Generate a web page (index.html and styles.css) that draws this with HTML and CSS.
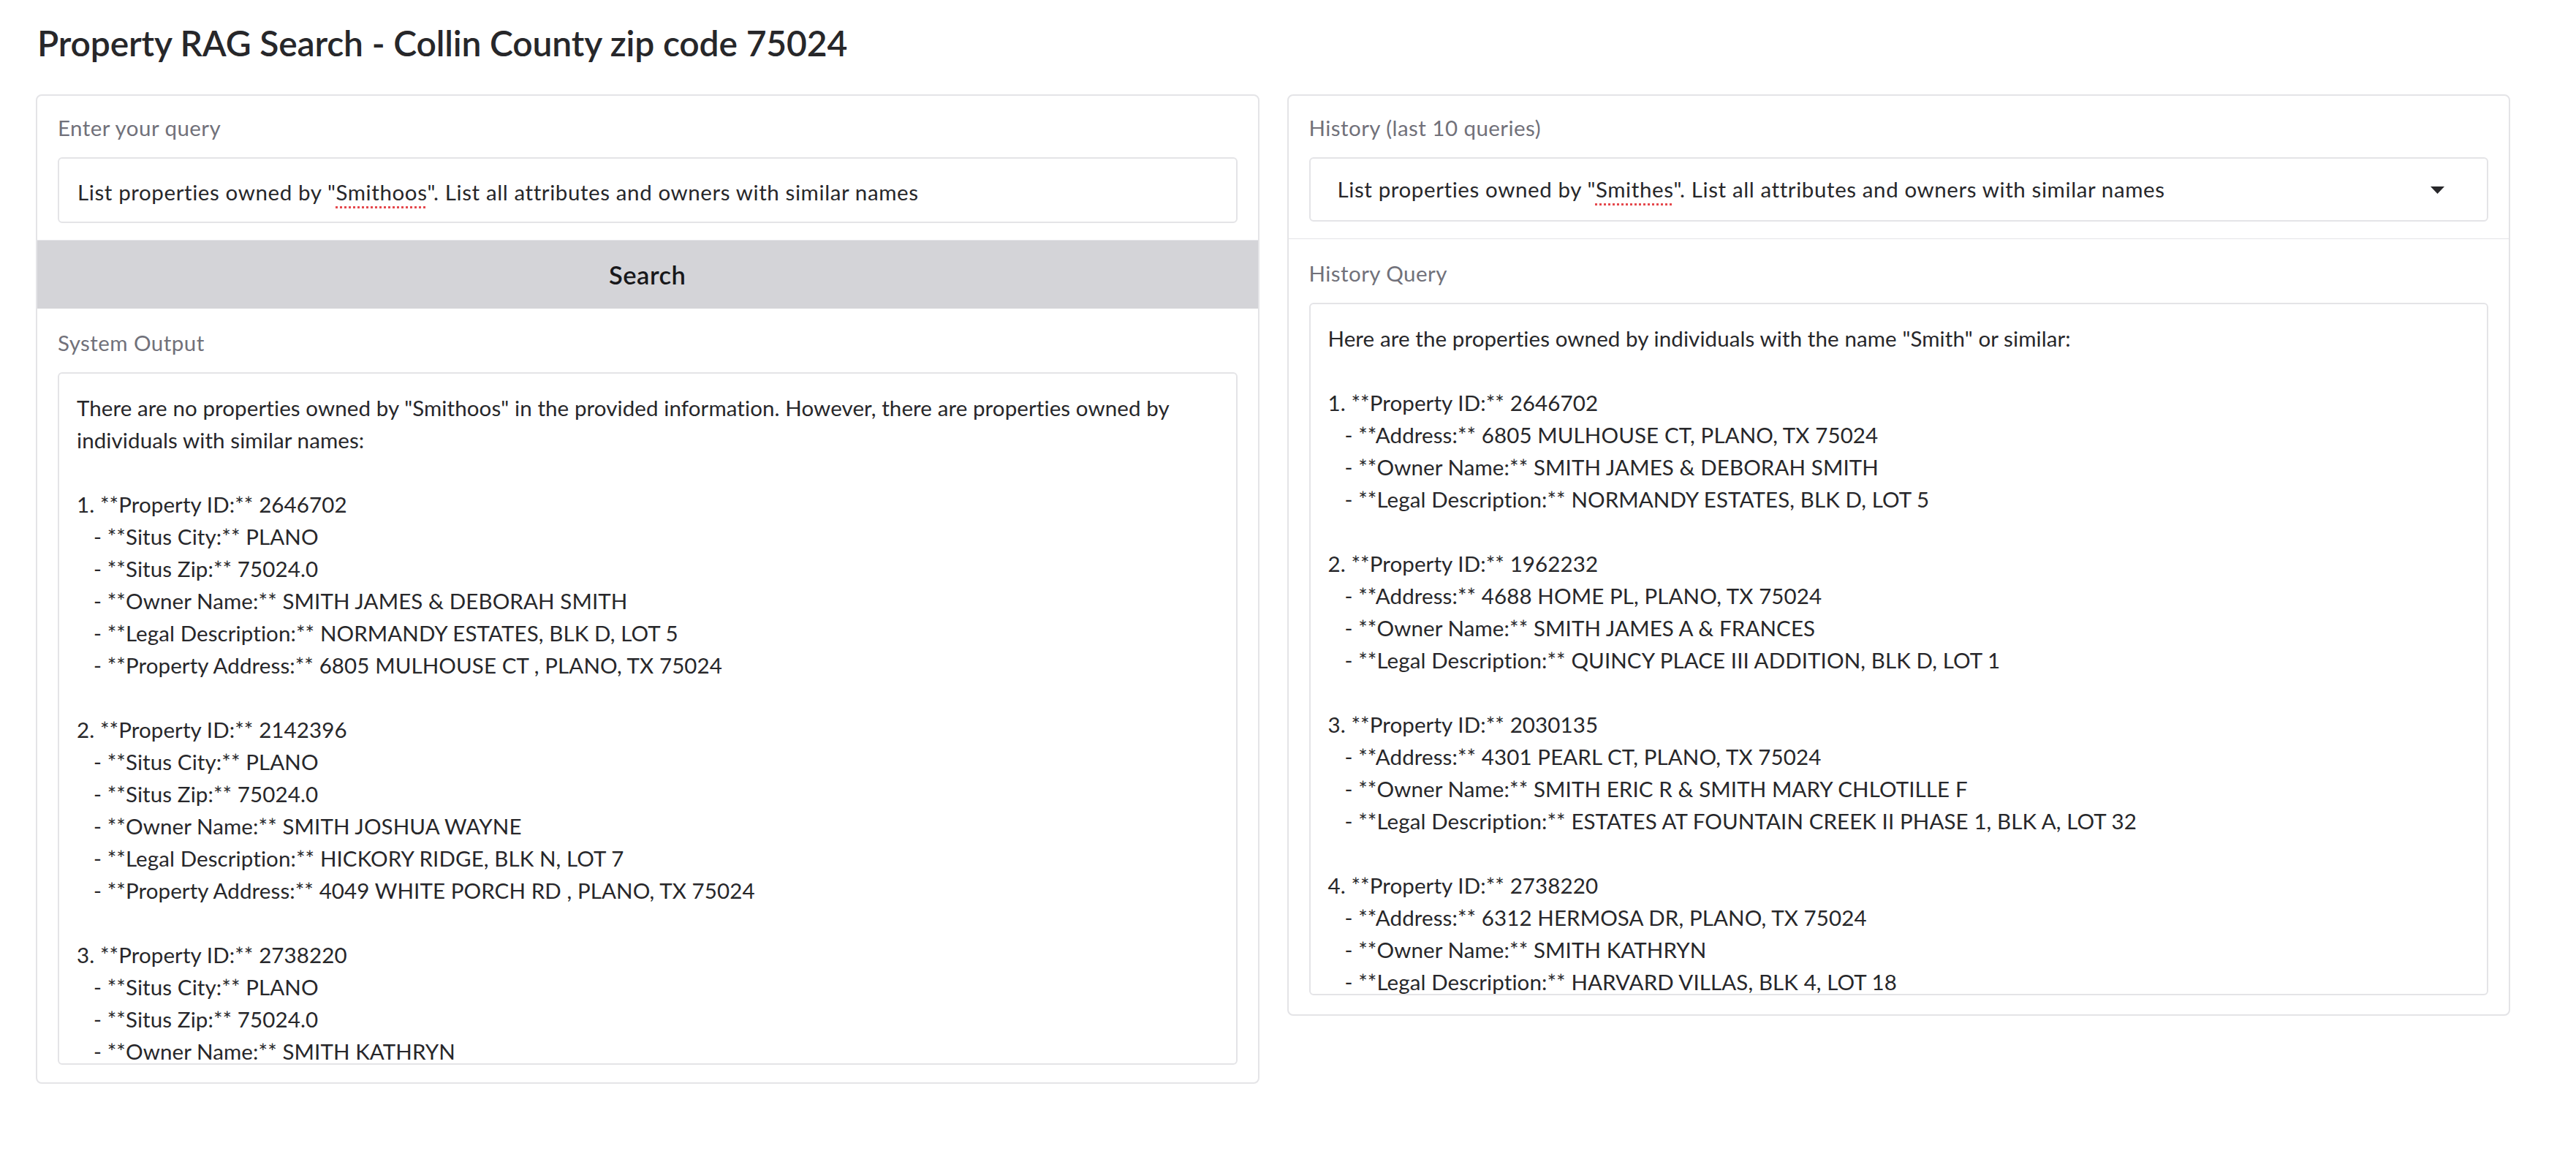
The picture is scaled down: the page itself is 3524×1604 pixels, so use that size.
FILE: index.html
```html
<!DOCTYPE html>
<html lang="en">
<head>
<meta charset="utf-8">
<title>Property RAG Search</title>
<link rel="stylesheet" href="styles.css">
</head>
<body>
<div class="app">
  <h1 class="title">Property RAG Search - Collin County zip code 75024</h1>
  <div class="columns">
    <section class="panel">
      <div class="block block-first">
        <div class="label">Enter your query</div>
        <div class="input">List properties owned by "<span class="misspelled">Smithoos</span>". List all attributes and owners with similar names</div>
      </div>
      <button class="search-btn" type="button">Search</button>
      <div class="block block-output">
        <div class="label">System Output</div>
        <div class="textarea">There are no properties owned by "Smithoos" in the provided information. However, there are properties owned by
individuals with similar names:

1. **Property ID:** 2646702
   - **Situs City:** PLANO
   - **Situs Zip:** 75024.0
   - **Owner Name:** SMITH JAMES &amp; DEBORAH SMITH
   - **Legal Description:** NORMANDY ESTATES, BLK D, LOT 5
   - **Property Address:** 6805 MULHOUSE CT , PLANO, TX 75024

2. **Property ID:** 2142396
   - **Situs City:** PLANO
   - **Situs Zip:** 75024.0
   - **Owner Name:** SMITH JOSHUA WAYNE
   - **Legal Description:** HICKORY RIDGE, BLK N, LOT 7
   - **Property Address:** 4049 WHITE PORCH RD , PLANO, TX 75024

3. **Property ID:** 2738220
   - **Situs City:** PLANO
   - **Situs Zip:** 75024.0
   - **Owner Name:** SMITH KATHRYN</div>
      </div>
    </section>
    <section class="panel">
      <div class="block block-first">
        <div class="label">History (last 10 queries)</div>
        <div class="dropdown">
          <span class="dropdown-text">List properties owned by "<span class="misspelled">Smithes</span>". List all attributes and owners with similar names</span>
          <svg class="caret" width="19" height="10" viewBox="0 0 19 10" aria-hidden="true"><path d="M0 0 L19 0 L9.5 10 Z" fill="#27272a"/></svg>
        </div>
      </div>
      <div class="block block-history">
        <div class="label">History Query</div>
        <div class="textarea">Here are the properties owned by individuals with the name "Smith" or similar:

1. **Property ID:** 2646702
   - **Address:** 6805 MULHOUSE CT, PLANO, TX 75024
   - **Owner Name:** SMITH JAMES &amp; DEBORAH SMITH
   - **Legal Description:** NORMANDY ESTATES, BLK D, LOT 5

2. **Property ID:** 1962232
   - **Address:** 4688 HOME PL, PLANO, TX 75024
   - **Owner Name:** SMITH JAMES A &amp; FRANCES
   - **Legal Description:** QUINCY PLACE III ADDITION, BLK D, LOT 1

3. **Property ID:** 2030135
   - **Address:** 4301 PEARL CT, PLANO, TX 75024
   - **Owner Name:** SMITH ERIC R &amp; SMITH MARY CHLOTILLE F
   - **Legal Description:** ESTATES AT FOUNTAIN CREEK II PHASE 1, BLK A, LOT 32

4. **Property ID:** 2738220
   - **Address:** 6312 HERMOSA DR, PLANO, TX 75024
   - **Owner Name:** SMITH KATHRYN
   - **Legal Description:** HARVARD VILLAS, BLK 4, LOT 18</div>
      </div>
    </section>
  </div>
</div>
</body>
</html>
```
FILE: styles.css
```css
* {
  box-sizing: border-box;
}

html, body {
  margin: 0;
  padding: 0;
  background: #ffffff;
}

body {
  font-family: "Lato", "Liberation Sans", sans-serif;
  color: #27272a;
}

.app {
  padding: 30px 90px 60px 49px;
}

.title {
  margin: 0;
  font-size: 48px;
  line-height: 1.2;
  font-weight: 600;
  letter-spacing: -0.15px;
  color: #27272a;
  padding-left: 2px;
}

.columns {
  display: grid;
  grid-template-columns: 1fr 1fr;
  column-gap: 38px;
  margin-top: 41px;
  align-items: start;
}

.panel {
  display: flex;
  flex-direction: column;
  border: 2px solid #e4e4e7;
  border-radius: 8px;
  background: #ffffff;
  overflow: hidden;
}

.block {
  padding: 22px 28px 23px 28px;
}

.block-output {
  padding-top: 25px;
  padding-bottom: 24px;
}

.block-history {
  border-top: 1px solid #e4e4e7;
  padding-top: 25px;
  padding-bottom: 26px;
}

.label {
  font-size: 29.5px;
  line-height: 44px;
  letter-spacing: 0.45px;
  color: #71717a;
  margin-bottom: 18px;
}

.input {
  height: 90px;
  border: 2px solid #e4e4e7;
  border-radius: 6px;
  padding: 24px 21px 18px 25px;
  font-size: 29.5px;
  line-height: 44px;
  letter-spacing: 0.6px;
  white-space: nowrap;
  overflow: hidden;
  color: #27272a;
}

.misspelled {
  text-decoration: underline dotted #e5484d;
  text-decoration-thickness: 3px;
  text-underline-offset: 8px;
}

.search-btn {
  display: flex;
  align-items: center;
  justify-content: center;
  height: 94px;
  border: none;
  border-top: 1px solid #e4e4e7;
  margin: 0;
  padding: 0;
  background: #d4d4d8;
  font-family: inherit;
  font-size: 34.5px;
  font-weight: 600;
  letter-spacing: 0.5px;
  color: #18181b;
}

.dropdown {
  display: flex;
  align-items: center;
  justify-content: space-between;
  height: 88px;
  border: 2px solid #e4e4e7;
  border-radius: 6px;
  padding: 0 58px 0 37px;
  font-size: 29.5px;
  line-height: 44px;
  letter-spacing: 0.6px;
  color: #27272a;
}

.dropdown-text {
  white-space: nowrap;
  overflow: hidden;
}

.caret {
  flex: none;
  margin-top: 2px;
}

.textarea {
  height: 947px;
  border: 2px solid #e4e4e7;
  border-radius: 6px;
  padding: 25px 21px 0 24px;
  font-size: 29.5px;
  line-height: 44px;
  letter-spacing: 0.1px;
  white-space: pre;
  overflow: hidden;
  color: #27272a;
}
```
